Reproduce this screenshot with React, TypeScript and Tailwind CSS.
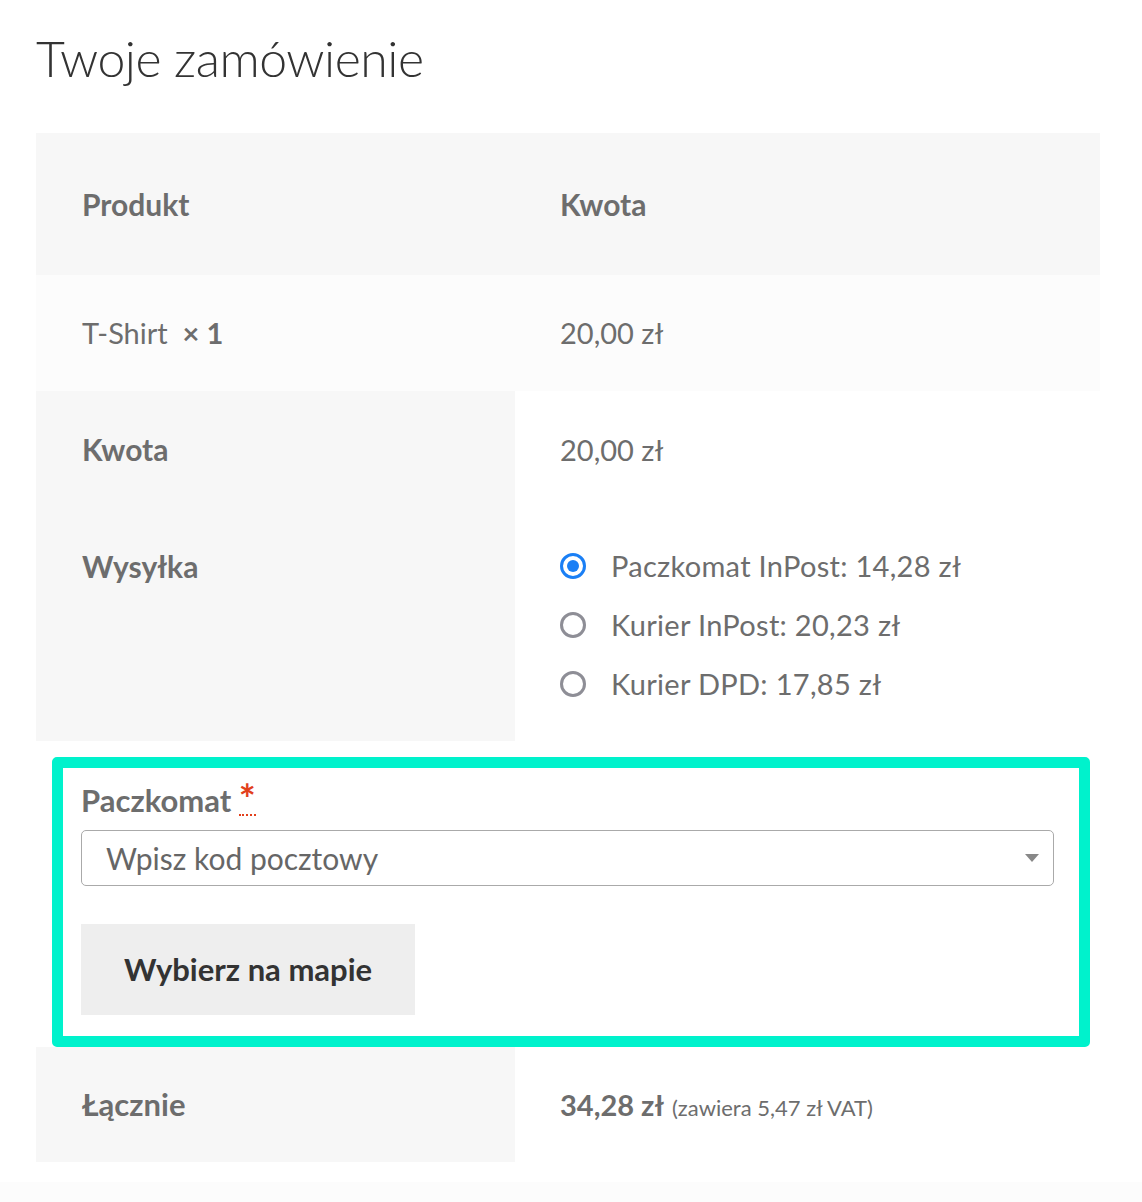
import React from "react";

function Radio({ checked }: { checked?: boolean }) {
  return checked ? (
    <span className="w-[26px] h-[26px] rounded-full border-[3px] border-[#1a7ff5] flex items-center justify-center shrink-0">
      <span className="w-[12px] h-[12px] rounded-full bg-[#1a7ff5]" />
    </span>
  ) : (
    <span className="w-[26px] h-[26px] rounded-full border-[3px] border-[#8e8e96] shrink-0" />
  );
}

export default function App() {
  const options = [
    { label: "Paczkomat InPost: 14,28 zł", checked: true },
    { label: "Kurier InPost: 20,23 zł" },
    { label: "Kurier DPD: 17,85 zł" },
  ];
  return (
    <div className="min-h-[1202px] flex flex-col bg-white font-['Lato',sans-serif] text-[#6d6d6d]">
      <div className="px-[36px] w-[1100px]">
        <h3 className="h-[133px] pt-[28px] text-[50px] leading-[60px] font-light text-[#333] tracking-[-0.5px]">
          Twoje zamówienie
        </h3>
        <div className="w-[1064px] text-[29px]">
          <div className="grid grid-cols-[479px_1fr] h-[142px] bg-[#f7f7f7] font-bold text-[30px] items-center">
            <div className="pl-[46px]">Produkt</div>
            <div className="pl-[45px]">Kwota</div>
          </div>
          <div className="grid grid-cols-[479px_1fr] h-[116px] bg-[#fcfcfc] items-center">
            <div className="pl-[46px]">
              T-Shirt&nbsp; <strong className="font-bold">× 1</strong>
            </div>
            <div className="pl-[45px]">20,00 zł</div>
          </div>
          <div className="grid grid-cols-[479px_1fr] h-[117px] items-center">
            <div className="h-full bg-[#f7f7f7] pl-[46px] font-bold text-[30px] flex items-center">Kwota</div>
            <div className="pl-[45px]">20,00 zł</div>
          </div>
          <div className="grid grid-cols-[479px_1fr] h-[233px]">
            <div className="h-full bg-[#f7f7f7] pl-[46px] pt-[38px] font-bold text-[30px]">
              <div className="h-[40px] flex items-center">Wysyłka</div>
            </div>
            <div className="pl-[45px] pt-[38px] flex flex-col gap-[19px]">
              {options.map((o) => (
                <label key={o.label} className="h-[40px] flex items-center gap-[25px]">
                  <Radio checked={o.checked} />
                  <span className="tracking-[0.3px]">{o.label}</span>
                </label>
              ))}
            </div>
          </div>
          <div className="pt-[16px] pl-[16px] pr-[10px]">
            <div className="border-[11px] border-[#00f2cc] rounded-[5px] bg-white pt-[14px] pb-[21px] pl-[18px] pr-[25px] text-[30px]">
              <div className="h-[36px] flex items-center font-bold text-[31px]">
                Paczkomat&nbsp;
                <abbr className="text-[#e2401c] no-underline border-b-2 border-dotted border-[#e2401c] leading-[30px] self-start mt-[2px] h-[32px] text-[40px]" title="wymagane">
                  *
                </abbr>
              </div>
              <div className="mt-[12px] h-[56px] border border-[#aaa] rounded-[5px] flex items-center justify-between pl-[24px] pr-[14px]">
                <span className="text-[#666]">Wpisz kod pocztowy</span>
                <svg width="14" height="8" viewBox="0 0 14 8">
                  <path d="M0 0 L14 0 L7 8 Z" fill="#888" />
                </svg>
              </div>
              <button className="mt-[38px] w-[334px] h-[91px] bg-[#eeeeee] text-[#333] font-bold text-[31px] flex items-center justify-center">
                Wybierz na mapie
              </button>
            </div>
          </div>
          <div className="grid grid-cols-[479px_1fr] h-[115px] items-center">
            <div className="h-full bg-[#f7f7f7] pl-[46px] font-bold text-[31px] flex items-center">Łącznie</div>
            <div className="pl-[45px] flex items-baseline gap-[8px]">
              <strong className="font-bold">34,28 zł</strong>
              <small className="text-[22px]">(zawiera 5,47 zł VAT)</small>
            </div>
          </div>
        </div>
      </div>
      <div className="h-[20px] mt-[20px] bg-[#fcfcfc] flex-1" />
    </div>
  );
}
